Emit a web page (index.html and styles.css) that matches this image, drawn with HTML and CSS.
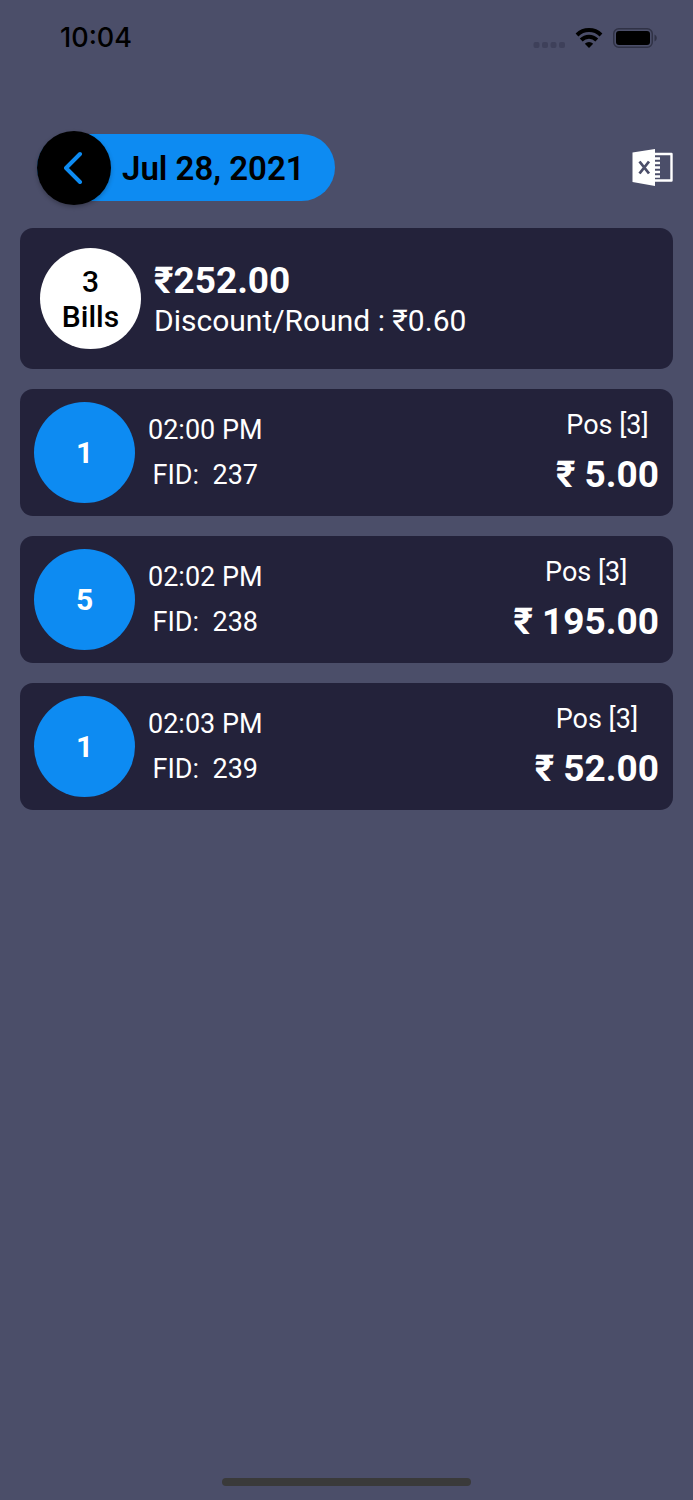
FILE: index.html
```html
<!DOCTYPE html>
<html lang="en">
<head>
<meta charset="utf-8">
<meta name="viewport" content="width=device-width, initial-scale=1">
<title>Bills</title>
<link rel="stylesheet" href="styles.css">
</head>
<body>
<div class="screen">
  <div class="status">
    <time class="clock">10:04</time>
    <div class="indicators">
      <svg width="32" height="20" viewBox="0 0 32 20" fill="#3e405a"><rect x=".5" y="14" width="6" height="6" rx="2"/><rect x="9" y="14" width="6" height="6" rx="2"/><rect x="17.500" y="14" width="6" height="6" rx="2"/><rect x="26" y="14" width="6" height="6" rx="2"/></svg>
      <svg width="28" height="20" viewBox="0 0 28 20"><g fill="none" stroke="#000" stroke-width="4"><path d="M2 7a17.200 17.200 0 0 1 24 0"/><path d="M6.200 12a11 11 0 0 1 15.600 0"/></g><path d="M14 20l-4.200-4.200a6 6 0 0 1 8.400 0z"/></svg>
      <svg width="44" height="20" viewBox="0 0 44 20"><rect x=".75" y=".75" width="38.500" height="18.500" rx="5" fill="none" stroke="#303246" stroke-width="1.500"/><rect x="3" y="3" width="34" height="14" rx="3"/><path d="M41.500 6.500c3 1.500 3 5.500 0 7z" fill="#303246"/></svg>
    </div>
  </div>
  <header class="header">
    <div class="date-pill">
      <button class="back" aria-label="Back"><svg width="20" height="34" viewBox="0 0 20 34"><path d="M16 3L2 17l14 14" fill="none" stroke="#0d8bf2" stroke-width="4" stroke-linecap="round" stroke-linejoin="round"/></svg></button>
      <h1 class="date">Jul 28, 2021</h1>
    </div>
    <button class="export" aria-label="Export to Excel"><svg width="42" height="40" viewBox="0 0 42 40"><path d="M1.500 4.500L24 1v37L1.500 34z" fill="#fff"/><path d="M24 6h16.500v26.500H24" fill="none" stroke="#fff" stroke-width="2.400" stroke-linejoin="round"/><path d="M24 10.500h5M24 15h5M24 19.500h5M24 24h5M24 28.500h5" stroke="#fff" stroke-width="2.400"/><path d="M8.500 13.500l9.500 12M18 13.500l-9.500 12" stroke="#4b4e69" stroke-width="2.800"/></svg></button>
  </header>
  <main class="list">
    <section class="card summary">
      <div class="circle count">3<br>Bills</div>
      <div class="totals"><strong class="amount">₹252.00</strong><span class="discount">Discount/Round : ₹0.60</span></div>
    </section>
    <article class="card bill">
      <div class="circle">1</div>
      <div class="details"><span>02:00 PM</span><span>FID:&nbsp; 237</span></div>
      <div class="payment"><span>Pos [3]</span><strong class="amount">₹ 5.00</strong></div>
    </article>
    <article class="card bill">
      <div class="circle">5</div>
      <div class="details"><span>02:02 PM</span><span>FID:&nbsp; 238</span></div>
      <div class="payment"><span>Pos [3]</span><strong class="amount">₹ 195.00</strong></div>
    </article>
    <article class="card bill">
      <div class="circle">1</div>
      <div class="details"><span>02:03 PM</span><span>FID:&nbsp; 239</span></div>
      <div class="payment"><span>Pos [3]</span><strong class="amount">₹ 52.00</strong></div>
    </article>
  </main>
  <div class="home"></div>
</div>
</body>
</html>
```
FILE: styles.css
```css
* { box-sizing: border-box; }
body { margin: 0; background: #4b4e69; color: #fff; font-family: Roboto, sans-serif; }
svg { display: block; }
button { padding: 0; border: 0; background: none; cursor: pointer; }
.screen { display: flex; flex-direction: column; min-height: 100vh; }
.status { display: flex; align-items: center; justify-content: space-between; height: 76px; padding: 0 36px 0 60px; color: #000; }
.clock { font: 500 27px/32px Inter, sans-serif; }
.indicators { display: flex; gap: 10px; }
.header { display: flex; align-items: center; justify-content: space-between; padding: 58px 20px 4px 37px; }
.date-pill { display: flex; align-items: center; gap: 11px; height: 67px; padding-right: 30px; border-radius: 34px; background: #0d8bf2; }
.back { display: grid; place-items: center; width: 74px; height: 74px; border-radius: 50%; background: #000; box-shadow: 0 2px 4px rgba(0, 0, 0, .25); }
.date { margin: 0; padding-top: 2px; color: #000; font-size: 33px; line-height: 40px; font-weight: 600; }
.list { display: flex; flex-direction: column; gap: 20px; padding: 23px 20px; }
.card { display: flex; align-items: center; background: #23223a; border-radius: 13px; }
.summary { padding: 20px; gap: 13px; }
.bill { padding: 13px 14px; gap: 13px; font-size: 27px; line-height: 32px; }
.circle { display: flex; align-items: center; justify-content: center; flex: none; width: 101px; height: 101px; border-radius: 50%; background: #0d8bf2; font-size: 30px; line-height: 35px; font-weight: 700; text-align: center; }
.count { background: #fff; color: #000; font-weight: 500; }
.totals { display: flex; flex-direction: column; }
.discount { font-size: 30px; line-height: 36px; }
.amount { font-size: 37px; line-height: 44px; font-weight: 700; }
.details, .payment { display: flex; flex-direction: column; align-items: center; }
.details { gap: 13px; }
.payment { gap: 12px; margin-left: auto; }
.home { width: 36%; height: 8px; margin: auto auto 14px; border-radius: 4px; background: #3a3a3a; }
```
